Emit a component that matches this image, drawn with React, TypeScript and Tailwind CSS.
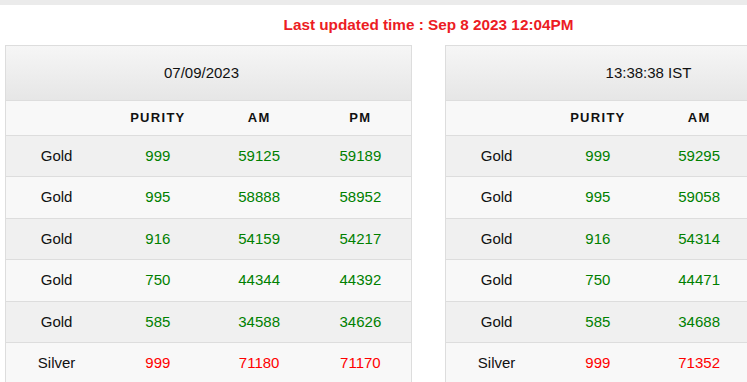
import React from 'react';

type Row = { metal: string; purity: string; am: string; pm: string; silver?: boolean };

const leftRows: Row[] = [
    { metal: 'Gold', purity: '999', am: '59125', pm: '59189' },
    { metal: 'Gold', purity: '995', am: '58888', pm: '58952' },
    { metal: 'Gold', purity: '916', am: '54159', pm: '54217' },
    { metal: 'Gold', purity: '750', am: '44344', pm: '44392' },
    { metal: 'Gold', purity: '585', am: '34588', pm: '34626' },
    { metal: 'Silver', purity: '999', am: '71180', pm: '71170', silver: true },
];

const rightRows: Row[] = [
    { metal: 'Gold', purity: '999', am: '59295', pm: '59295' },
    { metal: 'Gold', purity: '995', am: '59058', pm: '59058' },
    { metal: 'Gold', purity: '916', am: '54314', pm: '54314' },
    { metal: 'Gold', purity: '750', am: '44471', pm: '44471' },
    { metal: 'Gold', purity: '585', am: '34688', pm: '34688' },
    { metal: 'Silver', purity: '999', am: '71352', pm: '71352', silver: true },
];

export default function App() {
    return (
        <div className="w-full h-screen overflow-hidden bg-white font-['Liberation_Sans',Arial,sans-serif]">
            <div className="w-[857px]">
                {/* top strip */}
                <div className="h-[5px] bg-[#ebebeb]" />

                {/* title */}
                <div className="h-[40px] flex items-center justify-center pb-[1px]">
                    <span className="text-[15.3px] font-bold text-[#ec1c24] leading-none">
                        Last updated time : Sep 8 2023 12:04PM
                    </span>
                </div>

                <div className="flex gap-[33px] px-[5px]">
                    <RateTable title="07/09/2023" titleClass="pr-[14px]" rows={leftRows} />
                    <RateTable title="13:38:38 IST" rows={rightRows} />
                </div>
            </div>
        </div>
    );
}

function RateTable({ title, titleClass = '', rows }: { title: string; titleClass?: string; rows: Row[] }) {
    return (
        <div className="w-[407px] border border-[#dddddd] border-b-0">
            <div className={`h-[55px] border-b border-[#dddddd] bg-gradient-to-b from-[#f6f6f6] to-[#e6e6e6] flex items-center justify-center text-[15px] text-[#111]  ${titleClass}`}>
                {title}
            </div>
            <div className="h-[35px] border-b border-[#dddddd] bg-[#f8f8f8] grid grid-cols-4 items-center text-center text-[13px] font-bold tracking-[1.3px] text-[#111]">
                <span />
                <span>PURITY</span>
                <span>AM</span>
                <span>PM</span>
            </div>
            {rows.map((r, i) => (
                <div
                    key={i}
                    className={`h-[41.4px] border-b border-[#dddddd] grid grid-cols-4 items-center text-center text-[15px] ${i % 2 === 0 ? 'bg-[#f0f0f0]' : 'bg-[#f8f8f8]'}`}
                >
                    <span className="text-[#111]">{r.metal}</span>
                    <span className={r.silver ? 'text-[#ff0000]' : 'text-[#008000]'}>{r.purity}</span>
                    <span className={r.silver ? 'text-[#ff0000]' : 'text-[#008000]'}>{r.am}</span>
                    <span className={r.silver ? 'text-[#ff0000]' : 'text-[#008000]'}>{r.pm}</span>
                </div>
            ))}
        </div>
    );
}
